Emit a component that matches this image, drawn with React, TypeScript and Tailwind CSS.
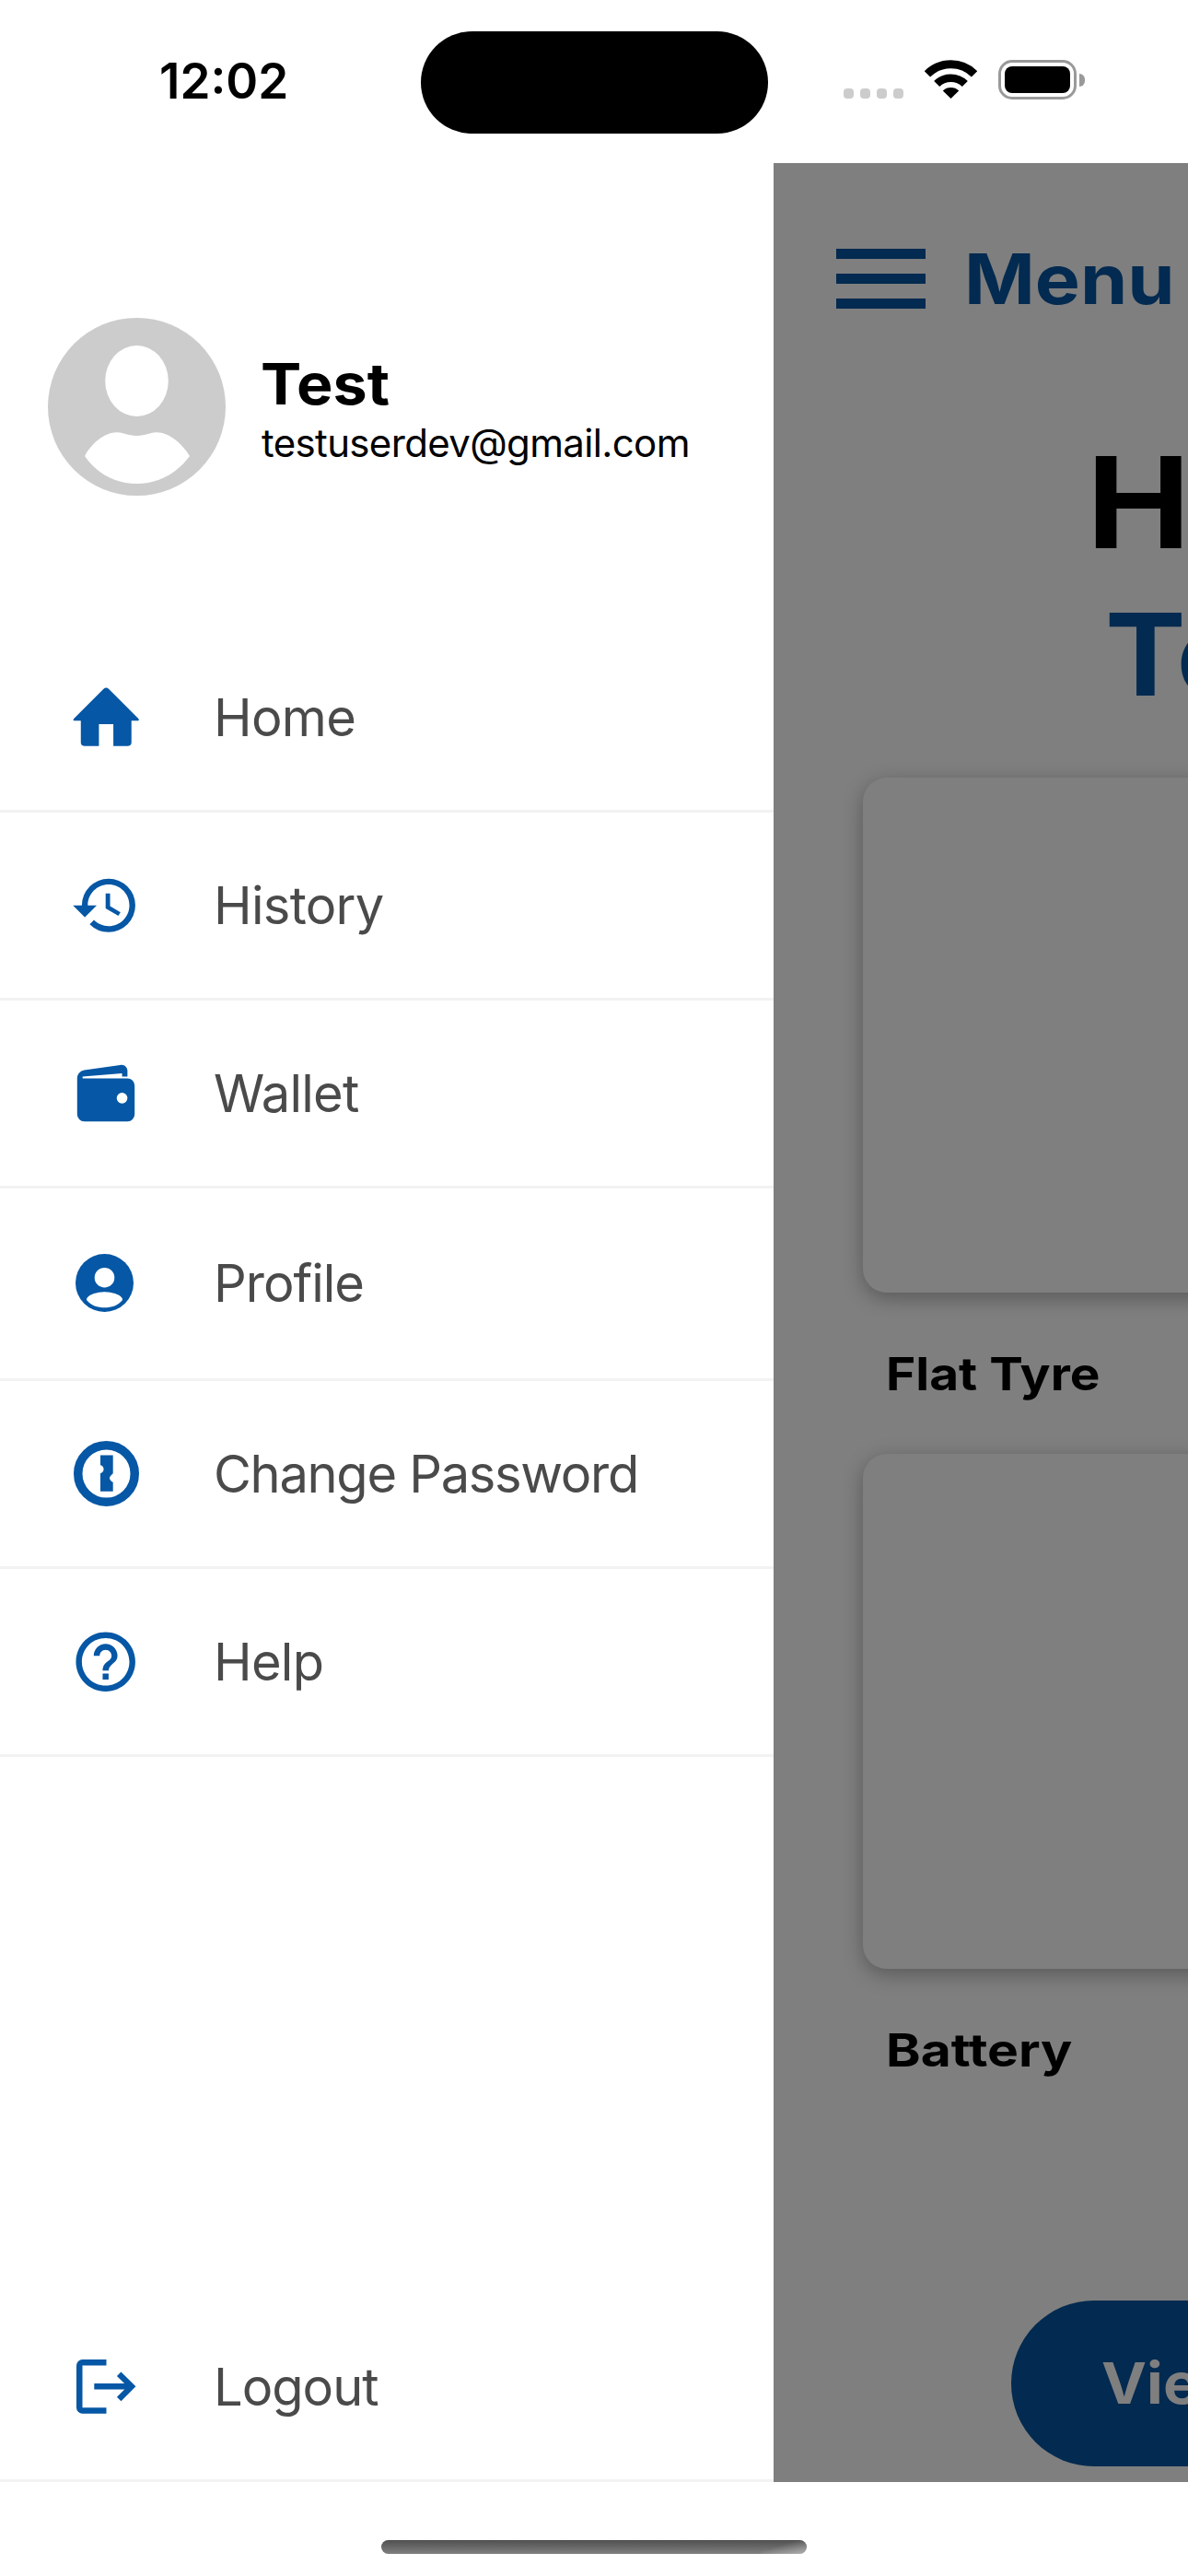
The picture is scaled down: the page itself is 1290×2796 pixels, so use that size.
import type { ReactNode } from "react";

function HomeIcon() {
  return (
    <svg className="size-[78.5px]" viewBox="0 0 20 20" fill="currentColor">
      <path d="M18.672 11H17v6c0 .445-.194 1-1 1h-4v-6H8v6H4c-.806 0-1-.555-1-1v-6H1.328c-.598 0-.47-.324-.06-.748L9.292 2.22c.195-.202.451-.302.708-.312.257.01.513.109.708.312l8.023 8.031c.411.425.539.749-.059.749z" />
    </svg>
  );
}

function HistoryIcon() {
  return (
    <svg className="size-[77.4px]" viewBox="0 0 24 24" fill="currentColor">
      <path d="M13 3a9 9 0 0 0-9 9H1l3.89 3.89.07.14L9 12H6c0-3.87 3.13-7 7-7s7 3.13 7 7-3.13 7-7 7c-1.93 0-3.68-.79-4.94-2.06l-1.42 1.42A8.954 8.954 0 0 0 13 21a9 9 0 0 0 0-18zm-1 5v5l4.28 2.54.72-1.21-3.5-2.08V8H12z" />
    </svg>
  );
}

function WalletIcon() {
  return (
    <svg className="size-[78px] -translate-y-px" viewBox="0 0 20 20" fill="currentColor">
      <path d="M16 6H3.5v-.5l11-.88v.88H16V4c0-1.1-.891-1.872-1.979-1.717L3.98 3.717C2.891 3.873 2 4.9 2 6v10a2 2 0 0 0 2 2h12a2 2 0 0 0 2-2V8a2 2 0 0 0-2-2zm-1.5 7.006a1.5 1.5 0 1 1 .001-3.001 1.5 1.5 0 0 1-.001 3.001z" />
    </svg>
  );
}

function ProfileIcon() {
  return (
    <svg className="size-[63px] -translate-x-[2px] -translate-y-px" viewBox="0 0 63 63">
      <circle cx="31.5" cy="31.5" r="31.5" fill="currentColor" />
      <circle cx="31.5" cy="25.7" r="10.8" fill="#fff" />
      <path d="M12 50C12 44 25 41.3 31.5 41.3S51 44 51 50C46.5 56 39 58.3 31.5 58.3S16.5 56 12 50Z" fill="#fff" />
    </svg>
  );
}

function PasswordIcon() {
  return (
    <svg className="size-[71px]" viewBox="0 0 71 71">
      <circle cx="35.5" cy="35.5" r="30.75" fill="none" stroke="currentColor" strokeWidth="9.5" />
      <path d="M29 15.5H42.7V35.2L40 38Q38 40.3 40 42.8Q41 44.4 42.7 44.8V54.8H29V35.2Q31 34.6 32.2 32.8Q33.4 30 31.6 27.8Q30.5 26.6 29 26.3Z" fill="currentColor" />
    </svg>
  );
}

function HelpIcon() {
  return (
    <svg className="size-[77.4px]" viewBox="0 0 24 24" fill="currentColor">
      <path d="M11 18h2v-2h-2v2zm1-16C6.48 2 2 6.48 2 12s4.48 10 10 10 10-4.48 10-10S17.52 2 12 2zm0 18c-4.41 0-8-3.59-8-8s3.59-8 8-8 8 3.59 8 8-3.59 8-8 8zm0-14c-2.21 0-4 1.79-4 4h2c0-1.1.9-2 2-2s2 .9 2 2c0 2-3 1.75-3 5h2c0-2.25 3-2.5 3-5 0-2.21-1.79-4-4-4z" />
    </svg>
  );
}

function LogoutIcon() {
  return (
    <svg className="h-[59px] w-[65px]" viewBox="0 0 65 59" fill="none" stroke="currentColor" strokeWidth="6.4">
      <path d="M0 6.5A6.5 6.5 0 0 1 6.5 0H32.5V6.5H6.5V52.2H32.5V58.7H6.5A6.5 6.5 0 0 1 0 52.2Z" fill="currentColor" stroke="none" />
      <path d="M19.3 29.3H58" />
      <path d="M46.2 15.7 59.9 29.3 46.2 43" />
    </svg>
  );
}

function MenuRow({
  icon,
  label,
  height = "h-[204px]",
  tracking = "tracking-[-0.7px]",
}: {
  icon: ReactNode;
  label: string;
  height?: string;
  tracking?: string;
}) {
  return (
    <div className={`flex shrink-0 items-center border-b-[3px] border-[#f2f2f2] pl-[75px] ${height}`}>
      <div className="flex w-20 shrink-0 justify-center text-[#0657a5]">{icon}</div>
      <span className={`ml-[77px] text-[56px] leading-none whitespace-nowrap text-[#4a4a4a] ${tracking}`}>{label}</span>
    </div>
  );
}

function StatusBar() {
  return (
    <header className="flex h-[177px] shrink-0 items-start bg-white">
      <div className="w-[457px] shrink-0 pt-[61px] pl-[173px] text-[53px] leading-[54px] font-semibold">12:02</div>
      <div className="mt-[33.5px] h-[111px] w-[377px] shrink-0 rounded-full bg-black" />
      <div className="mt-[96px] ml-[82px] flex gap-[7px]">
        {[0, 1, 2, 3].map((i) => (
          <div key={i} className="h-[11px] w-[11px] rounded-[4px] bg-[#ccc]" />
        ))}
      </div>
      <svg className="mt-[65px] ml-[23px] h-[42px] w-[57px]" viewBox="0 0 57 42" fill="none" stroke="#000">
        <path d="M2.9 15.4A36.2 36.2 0 0 1 54.1 15.4" strokeWidth="9" />
        <path d="M13.2 26A21.7 21.7 0 0 1 43.8 26" strokeWidth="8.6" />
        <path d="M28.5 42 19.8 33.4A12.6 12.6 0 0 1 37.2 33.4Z" fill="#000" stroke="none" />
      </svg>
      <div className="mt-[65px] ml-[23px] flex items-center gap-[3px]">
        <div className="h-[43px] w-[85px] rounded-[15px] border-[3px] border-[#999] p-1">
          <div className="h-[29px] w-[71px] rounded-[8px] bg-black" />
        </div>
        <div className="h-[14px] w-[6px] rounded-r-full bg-[#999]" />
      </div>
    </header>
  );
}

function Drawer() {
  return (
    <aside className="flex w-[840px] shrink-0 flex-col bg-white">
      <div className="flex h-[501px] shrink-0 items-start pt-[168px] pl-[52px]">
        <svg className="size-[193px] shrink-0" viewBox="0 0 193 193">
          <circle cx="96.5" cy="96.5" r="96.5" fill="#ccc" />
          <ellipse cx="96.5" cy="68.5" rx="34.3" ry="38.5" fill="#fff" />
          <path d="M40 150C47 137 61 124.3 75 124.3C82 124.3 86 128 96.5 128S111 124.3 118 124.3C132 124.3 146 137 154 150C139 170 119 180 96.5 180S54 170 40 150Z" fill="#fff" />
        </svg>
        <div className="ml-[38px] flex flex-col pt-[33px]">
          <span className="origin-left scale-x-[1.07] text-[62px] leading-[78px] font-bold">Test</span>
          <span className="mt-[2px] ml-px text-[42px] leading-[46px] tracking-[-0.65px]">testuserdev@gmail.com</span>
        </div>
      </div>
      <nav className="flex grow flex-col">
        <MenuRow icon={<HomeIcon />} label="Home" />
        <MenuRow icon={<HistoryIcon />} label="History" />
        <MenuRow icon={<WalletIcon />} label="Wallet" />
        <MenuRow icon={<ProfileIcon />} label="Profile" height="h-[209px]" tracking="tracking-[-1px]" />
        <MenuRow icon={<PasswordIcon />} label="Change Password" tracking="tracking-[-1.3px]" />
        <MenuRow icon={<HelpIcon />} label="Help" />
      </nav>
      <MenuRow icon={<LogoutIcon />} label="Logout" tracking="tracking-[-1px]" />
    </aside>
  );
}

function Card() {
  return <div className="h-[559px] w-[500px] shrink-0 rounded-[26px] bg-[#7f7f7f] shadow-[0_6px_22px_rgba(0,0,0,0.3)]" />;
}

function DimmedHome() {
  return (
    <main className="flex min-w-0 grow flex-col overflow-hidden bg-[#7f7f7f] whitespace-nowrap">
      <div className="flex h-[251px] shrink-0 items-center pl-[68px]">
        <div className="flex w-[97px] shrink-0 flex-col gap-4">
          <div className="h-[11px] bg-[#032a50]" />
          <div className="h-[11px] bg-[#032a50]" />
          <div className="h-[11px] bg-[#032a50]" />
        </div>
        <span className="ml-[42px] origin-left scale-x-[1.1] text-[75px] leading-none font-bold text-[#032a50]">Menu</span>
      </div>
      <div className="mt-[35px] flex h-[164px] shrink-0 items-center pl-[340px]">
        <span className="origin-left scale-x-[1.1] text-[137px] leading-none font-bold">Hello</span>
      </div>
      <div className="flex h-[166px] shrink-0 items-center pl-[360px]">
        <span className="origin-left scale-x-[1.06] text-[124px] leading-none font-bold text-[#032a50]">Test</span>
      </div>
      <div className="flex shrink-0 flex-col pt-[51px] pl-[97px]">
        <Card />
        <div className="flex h-[175px] items-center pl-[25px]">
          <span className="origin-left scale-x-[1.1] text-[50px] leading-none font-bold">Flat Tyre</span>
        </div>
        <Card />
        <div className="flex h-[175px] items-center pl-[25px]">
          <span className="origin-left scale-x-[1.14] text-[50px] leading-none font-bold">Battery</span>
        </div>
      </div>
      <div className="mt-[185px] ml-[258px] flex h-[180px] w-[620px] shrink-0 items-center rounded-full bg-[#032a50] pl-[98px]">
        <span className="origin-left scale-x-[1.06] text-[62px] leading-none font-bold text-[#7f7f7f]">View</span>
      </div>
    </main>
  );
}

export default function App() {
  return (
    <div className="flex h-[2796px] w-[1290px] flex-col overflow-hidden bg-white font-['Inter',sans-serif] text-black">
      <StatusBar />
      <div className="flex h-[2517px] shrink-0">
        <Drawer />
        <DimmedHome />
      </div>
      <footer className="flex grow justify-center pt-[63px]">
        <div className="flex h-[15px] w-[462px] justify-end overflow-hidden rounded-full bg-linear-to-b from-[#505050] to-[#808080]">
          <div className="w-[50px] bg-linear-to-br from-transparent from-40% to-white/40" />
        </div>
      </footer>
    </div>
  );
}
